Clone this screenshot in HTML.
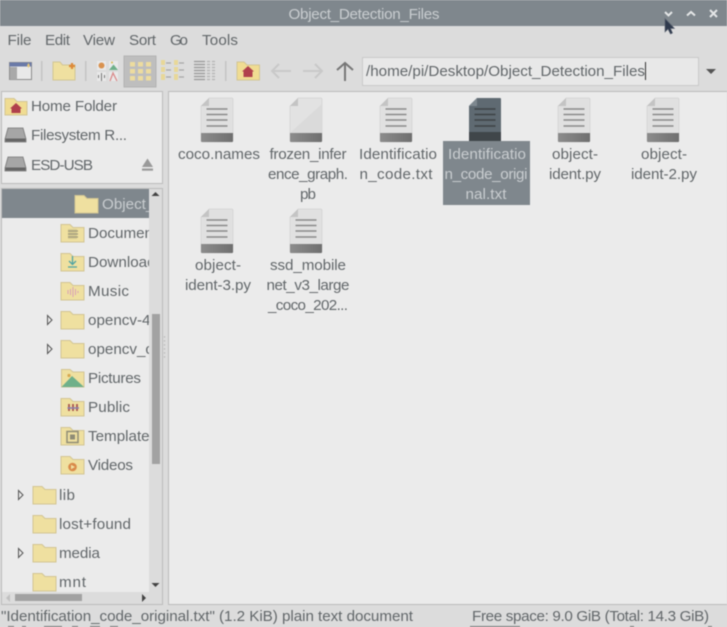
<!DOCTYPE html>
<html>
<head>
<meta charset="utf-8">
<style>
html,body{margin:0;padding:0;background:#dcdcdc;width:727px;height:627px;overflow:hidden}
svg{display:block;filter:blur(.5px)}
text{font-family:"Liberation Sans",sans-serif;font-size:15.2px;fill:#62676a}
.c{text-anchor:middle}
.w{fill:#c9cdd0}
</style>
</head>
<body>
<svg width="727" height="627" viewBox="0 0 727 627" xmlns="http://www.w3.org/2000/svg">
<defs>
<linearGradient id="band" x1="0" y1="0" x2="1" y2="0"><stop offset="0" stop-color="#8c8c8c"/><stop offset="1" stop-color="#6f6f6f"/></linearGradient>
<g id="doc">
  <path d="M8 0H31Q32 0 32 1V43Q32 44 31 44H1Q0 44 0 43V8Z" fill="#e0e0e0" stroke="#c8c8c8" stroke-width=".5"/>
  <path d="M8 0V8H0Z" fill="#c4c4c4"/>
  <path d="M0 35H32V43Q32 44 31 44H1Q0 44 0 43Z" fill="url(#band)"/>
  <path d="M5.500 11H26.500M5.500 16.500H26.500M5.500 22H26.500M5.500 28H26.500" stroke="#8a8a8a" stroke-width="1.600"/>
</g>
<g id="blank">
  <path d="M8 0H31Q32 0 32 1V43Q32 44 31 44H1Q0 44 0 43V8Z" fill="#e2e2e2" stroke="#c8c8c8" stroke-width=".5"/>
  <path d="M8 0V8H0Z" fill="#c4c4c4"/>
  <path d="M0 35L32 6V35Z" fill="#dadada"/>
  <path d="M0 35H32V43Q32 44 31 44H1Q0 44 0 43Z" fill="url(#band)"/>
</g>
<g id="fld">
  <path d="M0 0.500H9L12 3.500H23V18H0Z" fill="#efe0a0" stroke="#d2c594" stroke-width="1"/>
</g>
<clipPath id="tree"><rect x="1" y="189" width="148" height="403"/></clipPath>
</defs>

<!-- window -->
<rect width="727" height="627" fill="#dcdcdc"/>
<rect width="727" height="26" fill="#7f878d"/>
<text x="364" y="19" class="c w" textLength="151">Object_Detection_Files</text>
<path d="M665 12L668.500 15.500L672 12" fill="none" stroke="#e4e6e7" stroke-width="2"/>
<path d="M687 15.500L691 12L695 15.500" fill="none" stroke="#e4e6e7" stroke-width="2"/>
<path d="M710 10L717 17M717 10L710 17" fill="none" stroke="#e4e6e7" stroke-width="2"/>
<path d="M665 18.500V32L668 29L670.500 34L672.500 33L670.500 28.500H674.500Z" fill="#2f3a4d" stroke="#5a6270" stroke-width=".6"/>

<!-- menu -->
<text x="7.500" y="45" textLength="24">File</text>
<text x="45" y="45" textLength="25">Edit</text>
<text x="83" y="45" textLength="32">View</text>
<text x="129" y="45" textLength="27">Sort</text>
<text x="170" y="45" textLength="18">Go</text>
<text x="202" y="45" textLength="36">Tools</text>

<!-- toolbar -->
<rect x="9.500" y="62.500" width="22" height="17" fill="#e9e9e9" stroke="#8d8d8d"/>
<rect x="9.500" y="62.500" width="22" height="4" fill="#6a7aa8"/>
<rect x="10" y="67" width="7" height="12.500" fill="#a9a9a9"/>
<path d="M28.500 63L30 65.500L28.500 68L27 65.500Z" fill="#e8c97a"/>
<rect x="41" y="61" width="1.500" height="20" fill="#c4c4c4"/>
<path d="M53 62H60L62.500 65H75V80H53Z" fill="#efe0a0" stroke="#d2c594"/>
<path d="M69 66H75M72 63V69" stroke="#dd8a3a" stroke-width="2.200"/>
<rect x="85" y="61" width="1.500" height="20" fill="#c4c4c4"/>
<rect x="97" y="61" width="9" height="9" fill="#e9e9e9"/><circle cx="101.500" cy="65.500" r="3" fill="#d9924f"/>
<rect x="109" y="61" width="9" height="9" fill="#e9e9e9"/><path d="M109 70L113.500 64.500L118 70Z" fill="#6fb08a"/><circle cx="112" cy="62.500" r="1" fill="#d8b84f"/>
<rect x="97" y="72" width="9" height="9" fill="#e9e9e9"/><path d="M98.500 75V78M101.500 73V81M104.500 75V78" stroke="#777" stroke-width="1"/>
<rect x="109" y="72" width="9" height="9" fill="#e9e9e9"/><path d="M110 81L113 73L117 81" fill="none" stroke="#d98b8b" stroke-width="1.300"/>
<rect x="124" y="56" width="32" height="31" fill="#bebebe" stroke="#b3b3b3"/>
<g fill="#eddc9e">
  <rect x="130" y="62" width="5" height="4.500"/><rect x="138" y="62" width="5" height="4.500"/><rect x="146" y="62" width="5" height="4.500"/>
  <rect x="130" y="69" width="5" height="4.500"/><rect x="138" y="69" width="5" height="4.500"/><rect x="146" y="69" width="5" height="4.500"/>
  <rect x="130" y="76" width="5" height="4.500"/><rect x="138" y="76" width="5" height="4.500"/><rect x="146" y="76" width="5" height="4.500"/>
</g>
<g fill="#e8d898">
  <rect x="161" y="60" width="4" height="5"/><rect x="161" y="67" width="4" height="5"/><rect x="161" y="74" width="4" height="6"/>
  <rect x="174" y="60" width="4" height="5"/><rect x="174" y="67" width="4" height="5"/><rect x="174" y="74" width="4" height="6"/>
</g>
<path d="M166 63H171M166 70H171M166 77H171M179 63H184M179 70H184M179 77H184" stroke="#a6a6a6" stroke-width="1.300"/>
<path d="M194 61.500H205M194 64.500H205M194 67.500H205M194 70.500H205M194 73.500H205M194 76.500H205M194 79.500H205" stroke="#989898" stroke-width="1.200"/>
<path d="M207 61.500H210M207 64.500H210M207 67.500H210M207 70.500H210M207 73.500H210M207 76.500H210M207 79.500H210M212 61.500H215M212 64.500H215M212 67.500H215M212 70.500H215M212 73.500H215M212 76.500H215M212 79.500H215" stroke="#b3b3b3" stroke-width="1.200"/>
<rect x="225" y="61" width="1.500" height="20" fill="#c4c4c4"/>
<path d="M237 62H244L247 65H259.500V80H237Z" fill="#f0dc92" stroke="#d2c594"/>
<path d="M248 66L254 71.500H252.500V77H243.500V71.500H242Z" fill="#b0404c"/>
<path d="M291 71H272M279 64L272 71L279 78" fill="none" stroke="#c9c9c9" stroke-width="2"/>
<path d="M303 71H322M315 64L322 71L315 78" fill="none" stroke="#c9c9c9" stroke-width="2"/>
<path d="M345 81V63M337 70L345 63L353 70" fill="none" stroke="#777" stroke-width="2"/>

<!-- path entry -->
<rect x="362.500" y="57.500" width="336" height="28" fill="#e8e8e8" stroke="#c9c9c9"/>
<text x="366" y="76" textLength="279">/home/pi/Desktop/Object_Detection_Files</text>
<rect x="645" y="62" width="1" height="18" fill="#333"/>
<path d="M706 69H716L711 74Z" fill="#555"/>

<!-- places -->
<rect x="1.500" y="91.500" width="161" height="92" fill="#ebebeb" stroke="#bcbcbc"/>
<g transform="translate(5,98)">
  <path d="M0 0.500H9L12 3.500H22V17H0Z" fill="#f0dc92" stroke="#d2c594"/>
  <path d="M11 5L17 10.500H15.500V15H6.500V10.500H5Z" fill="#b0404c"/>
</g>
<text x="31" y="111" textLength="86">Home Folder</text>
<path d="M8 128H23L26 139V142H5V139Z" fill="#a6a6a6" stroke="#777" stroke-width=".8"/>
<rect x="5.500" y="138.500" width="20" height="3" fill="#666"/>
<text x="31" y="140" textLength="96">Filesystem R...</text>
<path d="M8 157H23L26 168V171H5V168Z" fill="#a6a6a6" stroke="#777" stroke-width=".8"/>
<rect x="5.500" y="167.500" width="20" height="3" fill="#666"/>
<text x="31" y="170" textLength="62">ESD-USB</text>
<path d="M142 167L147.500 158.500L153 167Z" fill="#9a9a9a"/><rect x="142" y="168.500" width="11" height="2.200" fill="#9a9a9a"/>

<!-- tree -->
<rect x="1.500" y="188.500" width="161" height="416" fill="#ebebeb" stroke="#bcbcbc"/>
<rect x="2" y="189" width="147" height="29" fill="#7f878d"/>
<g clip-path="url(#tree)">
  <use href="#fld" x="75" y="195"/>
  <text x="102" y="209" class="w">Object_Detection</text>

  <use href="#fld" x="61" y="224"/>
  <rect x="68" y="229" width="9" height="10" fill="#d9cc92"/>
  <path d="M68 231H78M68 234H78M68 237H78" stroke="#a09a7c" stroke-width="1.200"/>
  <text x="88" y="238">Documents</text>

  <use href="#fld" x="61" y="253"/>
  <path d="M72.500 256V264M69 261L72.500 264.500L76 261M68 267H77" fill="none" stroke="#4fa3a3" stroke-width="1.300"/>
  <text x="88" y="267">Downloads</text>

  <use href="#fld" x="61" y="282"/>
  <path d="M68 290V294M70.500 289V295M73 287V297M75.500 289V295M78 291V293" stroke="#d9a0b8" stroke-width="1"/>
  <text x="88" y="296" textLength="41">Music</text>

  <use href="#fld" x="61" y="311"/>
  <text x="88" y="325">opencv-4.5</text>

  <use href="#fld" x="61" y="340"/>
  <text x="88" y="354">opencv_contrib</text>

  <path d="M61.500 369.500H70L73 372H84V387H61.500Z" fill="#efe0a0" stroke="#d2c594"/>
  <path d="M61.500 387L72 376L84 387Z" fill="#6fb08a"/><circle cx="69" cy="375.500" r="1.600" fill="#d8a84f"/>
  <text x="88" y="383" textLength="53">Pictures</text>

  <use href="#fld" x="61" y="398"/>
  <path d="M69 404V411M73 404V411M77 404V411" stroke="#a8544f" stroke-width="1.800"/>
  <path d="M67.500 408H79" stroke="#8a7fb0" stroke-width="1.500"/>
  <text x="88" y="412" textLength="42">Public</text>

  <use href="#fld" x="61" y="427"/>
  <rect x="67" y="431.500" width="11" height="11" fill="none" stroke="#8f8c76" stroke-width="1.500"/><rect x="70" y="434.500" width="5" height="5" fill="#8f8c76"/>
  <text x="88" y="441">Templates</text>

  <use href="#fld" x="61" y="456"/>
  <circle cx="72.500" cy="467" r="4.300" fill="#d98a4a"/><path d="M71 464.800L75 467L71 469.200Z" fill="#f0e1a2"/>
  <text x="88" y="470" textLength="45">Videos</text>

  <use href="#fld" x="33" y="486"/>
  <text x="59" y="500" textLength="16">lib</text>
  <use href="#fld" x="33" y="515"/>
  <text x="59" y="529" textLength="72">lost+found</text>
  <use href="#fld" x="33" y="544"/>
  <text x="59" y="558" textLength="41">media</text>
  <use href="#fld" x="33" y="573"/>
  <text x="59" y="587" textLength="27">mnt</text>
</g>
<!-- expanders -->
<path d="M47.500 315.500L52 320L47.500 324.500Z M47.500 344.500L52 349L47.500 353.500Z M18.500 490.500L23 495L18.500 499.500Z M18.500 548.500L23 553L18.500 557.500Z" fill="#ebebeb" stroke="#555" stroke-width="1"/>

<!-- scrollbars -->
<rect x="149" y="189" width="13" height="415" fill="#dcdcdc"/>
<rect x="152" y="314" width="8" height="150" fill="#a2a2a2"/>
<path d="M151.500 196L155.500 192L159.500 196Z" fill="#444"/>
<path d="M151.500 583L155.500 587L159.500 583Z" fill="#444"/>
<rect x="2" y="592" width="147" height="12" fill="#dcdcdc"/>
<rect x="15" y="594" width="67" height="7" fill="#a2a2a2"/>
<path d="M10 594L6 598L10 602Z" fill="#c0c0c0"/>
<path d="M142 594L146 598L142 602Z" fill="#444"/>
<g fill="#b3b3b3"><circle cx="164.500" cy="337" r=".7"/><circle cx="164.500" cy="341" r=".7"/><circle cx="164.500" cy="345" r=".7"/><circle cx="164.500" cy="349" r=".7"/><circle cx="164.500" cy="353" r=".7"/><circle cx="164.500" cy="357" r=".7"/></g>

<!-- main pane -->
<rect x="168.500" y="91.500" width="559" height="513" fill="#ebebeb" stroke="#bcbcbc"/>

<use href="#doc" x="201" y="98"/>
<text x="219" y="159" class="c" textLength="82">coco.names</text>

<use href="#blank" x="290" y="98"/>
<text x="308" y="159" class="c" textLength="77">frozen_infer</text>
<text x="308" y="179" class="c" textLength="80">ence_graph.</text>
<text x="308" y="199" class="c" textLength="16">pb</text>

<use href="#doc" x="380" y="98"/>
<text x="398" y="159" class="c" textLength="78">Identificatio</text>
<text x="396" y="179" class="c" textLength="73">n_code.txt</text>

<g transform="translate(469,98)">
  <path d="M8 0H31Q32 0 32 1V43H0V8Z" fill="#5f6a72"/>
  <path d="M8 0V8H0Z" fill="#7e888f"/>
  <rect x="0" y="34" width="32" height="9" fill="#40464a"/>
  <path d="M5.500 11H26.500M5.500 16.500H26.500M5.500 22H26.500M5.500 28H26.500" stroke="#3d4245" stroke-width="1.600"/>
</g>
<rect x="443" y="141" width="87" height="64" fill="#7f878d"/>
<text x="487" y="159" class="c w" textLength="78">Identificatio</text>
<text x="486" y="179" class="c w" textLength="83">n_code_origi</text>
<text x="486" y="199" class="c w" textLength="41">nal.txt</text>

<use href="#doc" x="558" y="98"/>
<text x="575" y="159" class="c" textLength="46">object-</text>
<text x="575" y="179" class="c" textLength="52">ident.py</text>

<use href="#doc" x="647" y="98"/>
<text x="664" y="159" class="c" textLength="46">object-</text>
<text x="664" y="179" class="c" textLength="66">ident-2.py</text>

<use href="#doc" x="201" y="209"/>
<text x="218" y="270" class="c" textLength="46">object-</text>
<text x="218" y="290" class="c" textLength="66">ident-3.py</text>

<use href="#doc" x="290" y="209"/>
<text x="308" y="270" class="c" textLength="76">ssd_mobile</text>
<text x="308" y="290" class="c" textLength="83">net_v3_large</text>
<text x="308" y="310" class="c" textLength="80">_coco_202...</text>

<!-- status -->
<text x="1" y="621" textLength="412">"Identification_code_original.txt" (1.2 KiB) plain text document</text>
<text x="472" y="621" textLength="237">Free space: 9.0 GiB (Total: 14.3 GiB)</text>
<!-- clipped marks at bottom edge -->
<path d="M8 626.500H14M22 626.500H26M44 626.500H62M72 626.500H78M90 626.500H100M110 626.500H118M470 626.500H520M630 626.500H634M708 626.500H712" stroke="#777" stroke-width="1"/>
</svg>
</body>
</html>
